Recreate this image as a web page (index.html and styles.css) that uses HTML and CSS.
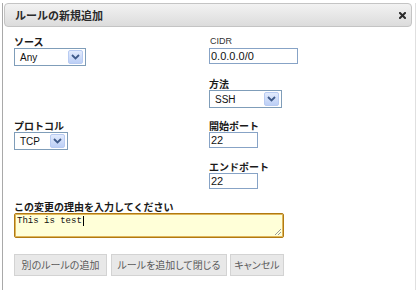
FILE: index.html
```html
<!DOCTYPE html>
<html lang="ja">
<head>
<meta charset="utf-8">
<title>ルールの新規追加</title>
<link rel="stylesheet" href="styles.css">
</head>
<body>
<div class="dialog">
  <div class="dialog__header">
    <span class="dialog__title">ルールの新規追加</span>
    <span class="dialog__close" aria-label="閉じる">
      <svg width="7" height="7" viewBox="0 0 7 7"><path d="M1 1 L6 6 M6 1 L1 6" stroke="#2b2b2b" stroke-width="2" stroke-linecap="square"/></svg>
    </span>
  </div>
  <div class="dialog__body">
    <div class="fields">
      <div class="field">
        <div class="label">ソース</div>
        <div class="select select--source"><span class="select__value">Any</span><span class="select__arrow"><svg width="9" height="6" viewBox="0 0 9 6"><path d="M1 1 L4.5 4.5 L8 1" fill="none" stroke="#3f5a8a" stroke-width="1.8"/></svg></span></div>
      </div>
      <div class="field">
        <div class="label label--latin">CIDR</div>
        <div class="input input--cidr">0.0.0.0/0</div>
      </div>
      <div class="field"></div>
      <div class="field">
        <div class="label">方法</div>
        <div class="select select--method"><span class="select__value">SSH</span><span class="select__arrow"><svg width="9" height="6" viewBox="0 0 9 6"><path d="M1 1 L4.5 4.5 L8 1" fill="none" stroke="#3f5a8a" stroke-width="1.8"/></svg></span></div>
      </div>
      <div class="field">
        <div class="label">プロトコル</div>
        <div class="select select--protocol"><span class="select__value">TCP</span><span class="select__arrow"><svg width="9" height="6" viewBox="0 0 9 6"><path d="M1 1 L4.5 4.5 L8 1" fill="none" stroke="#3f5a8a" stroke-width="1.8"/></svg></span></div>
      </div>
      <div class="field">
        <div class="label">開始ポート</div>
        <div class="input input--port">22</div>
      </div>
      <div class="field"></div>
      <div class="field">
        <div class="label">エンドポート</div>
        <div class="input input--port">22</div>
      </div>
    </div>
    <div class="reason">
      <div class="label">この変更の理由を入力してください</div>
      <div class="textarea"><span class="textarea__text">This is test</span><span class="caret"></span>
        <svg class="textarea__grip" width="8" height="8" viewBox="0 0 8 8"><path d="M7 1 L1 7 M7 4 L4 7" stroke="#9a9a9a" stroke-width="1"/></svg>
      </div>
    </div>
    <div class="actions">
      <button class="btn btn--another">別のルールの追加</button>
      <button class="btn btn--close">ルールを追加して閉じる</button>
      <button class="btn btn--cancel">キャンセル</button>
    </div>
  </div>
</div>
</body>
</html>
```
FILE: styles.css
```css
html, body {
  margin: 0;
  padding: 0;
  background: #ffffff;
}
body {
  width: 417px;
  height: 290px;
  overflow: hidden;
  font-family: "Noto Sans CJK JP", "Liberation Sans", sans-serif;
}
.dialog {
  margin-left: 2px;
  width: 412px;
  height: 290px;
  border-left: 1px solid #a9a9a9;
  border-right: 1px solid #e0e0e0;
  background: #fff;
}
.dialog__header {
  margin: 3px 3px 0 1px;
  height: 22px;
  border: 1px solid #c4c4c4;
  border-radius: 4px;
  background: linear-gradient(#f2f2f2, #dcdcdc);
  display: flex;
  align-items: center;
  justify-content: space-between;
  padding: 0 5px 0 10px;
}
.dialog__title {
  font-size: 11px;
  font-weight: bold;
  color: #2a2a2a;
  line-height: 13px;
}
.dialog__close {
  display: flex;
  margin-top: 1px;
}
.dialog__body {
  padding: 8px 0 0 11px;
}
.fields {
  display: grid;
  grid-template-columns: 195px 1fr;
  grid-template-rows: 42px 42px 41px 40px;
}
.field {
  display: flex;
  flex-direction: column;
  align-items: flex-start;
}
.label {
  font-size: 10px;
  font-weight: bold;
  line-height: 13px;
  height: 13px;
  color: #1a1a1a;
  white-space: nowrap;
}
.label--latin {
  font-family: "Liberation Sans", sans-serif;
  font-weight: normal;
  font-size: 9px;
  color: #333;
  padding-left: 1px;
}
.select {
  box-sizing: border-box;
  height: 18px;
  border: 1px solid #7f9db9;
  background: #fff;
  display: flex;
  align-items: center;
  justify-content: space-between;
  font-family: "Liberation Sans", sans-serif;
  font-size: 10px;
  color: #111;
}
.select--source { width: 72px; }
.select--method { width: 73px; }
.select--protocol { width: 54px; }
.select__value {
  padding-left: 5px;
  padding-top: 1px;
  line-height: 12px;
}
.select__arrow {
  box-sizing: border-box;
  width: 15px;
  height: 14px;
  margin-right: 2px;
  border: 1px solid #b8cbf2;
  border-radius: 2px;
  background: linear-gradient(#e2ebfd, #bccff6);
  display: flex;
  align-items: center;
  justify-content: center;
}
.input {
  box-sizing: border-box;
  height: 16px;
  border: 1px solid #87a3c6;
  font-family: "Liberation Sans", sans-serif;
  font-size: 11px;
  line-height: 14px;
  padding-left: 1px;
  color: #111;
}
.input--cidr { width: 89px; }
.input--port { width: 49px; }
.reason {
  display: flex;
  flex-direction: column;
}
.textarea {
  position: relative;
  box-sizing: border-box;
  width: 270px;
  height: 25px;
  border: 1px solid #b07a12;
  box-shadow: 0 0 0 1px #e0b65a inset;
  border-radius: 2px;
  background: #ffffd8;
  padding: 2px 2px;
  font-family: "Liberation Mono", monospace;
  font-size: 9px;
  line-height: 10px;
  color: #111;
  display: flex;
  align-items: flex-start;
}
.caret {
  display: inline-block;
  width: 1px;
  height: 10px;
  margin-left: 1px;
  background: #000;
}
.textarea__grip {
  position: absolute;
  right: 1px;
  bottom: 1px;
}
.actions {
  display: flex;
  gap: 3px;
  margin-top: 16px;
}
.btn {
  box-sizing: border-box;
  height: 22px;
  padding: 0;
  border: 1px solid #d3d3d3;
  background: #e8e8e8;
  color: #5a5a5a;
  font-family: "Noto Sans CJK JP", sans-serif;
  font-size: 10px;
  font-feature-settings: "palt";
  text-align: center;
  line-height: 20px;
}
.btn--another { width: 93px; margin-right: 1px; }
.btn--close { width: 116px; }
.btn--cancel { width: 54px; }
```
